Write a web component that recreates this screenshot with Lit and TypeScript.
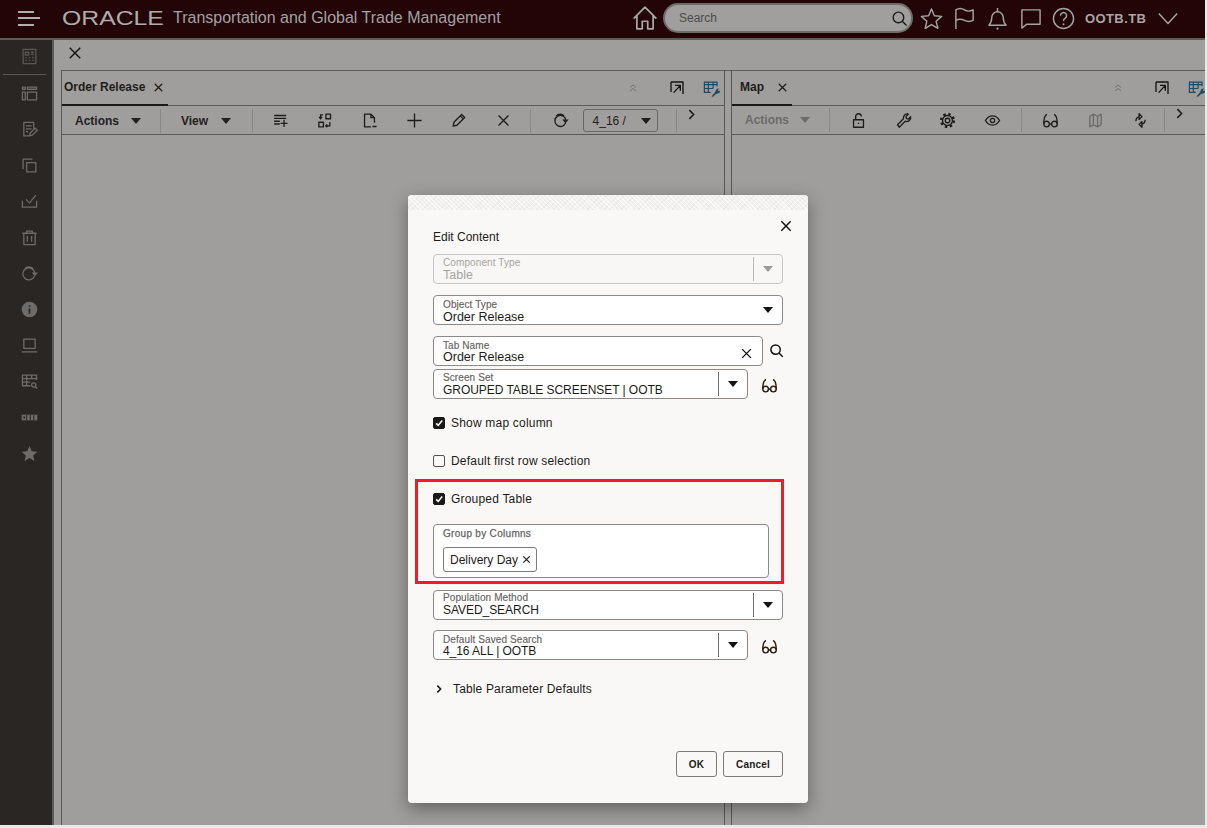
import { LitElement, html, css, svg } from "lit";
import { customElement } from "lit/decorators.js";

const P: Record<string, any> = {
  close: svg`<path d="M5 5L19 19M19 5L5 19"/>`,
  rowsPlus: svg`<path d="M3 5h17M3 9h17M3 13h8M3 17h8M17 11v10M12 16h10"/>`,
  group: svg`<rect x="14" y="3" width="6.5" height="6.5"/><rect x="4" y="14.5" width="6.5" height="6.5"/><path d="M10 4H6.5v5M4.500 7l2 2.500 2-2.500M14 19.500h5.500V14M16 17.500l-2.200 2 2.200 2" stroke-linejoin="miter"/>`,
  docMinus: svg`<path d="M14 21H5V3h9l5 5v7M14 3v5h5M16 20.500h6"/>`,
  plus: svg`<path d="M12 2v20M2 12h20"/>`,
  pencil: svg`<path d="M4.500 20l1-5.500L16.500 3.500l4.200 4.200L9.700 18.700zM14.500 5.500l4.200 4.200"/>`,
  refresh: svg`<path d="M19.500 11a7.800 7.800 0 1 0-.4 4.500M6 5.500a7.800 7.800 0 0 1 11-.2"/><path d="M14.500 10.500h9l-4.500 5.500z" fill="currentColor" stroke="none"/>`,
  lock: svg`<rect x="5" y="11" width="14" height="10.500"/><path d="M8 11V6.500a4 4 0 0 1 8 0M11 16h2"/>`,
  wrench: svg`<path d="M3.500 18l8.500-8.500a5.500 5.500 0 0 1 7-6.500l-3.400 3.400.6 2.900 2.900.6L22 6.500a5.500 5.500 0 0 1-7.500 6.500L6 21.500z"/>`,
  gear: svg`<circle cx="12" cy="12" r="3.200"/><circle cx="12" cy="12" r="7"/><circle cx="12" cy="12" r="9" stroke-width="3.400" stroke-dasharray="3.400 3.670"/>`,
  eye: svg`<circle cx="12" cy="12" r="3"/><path d="M2 12c3-5 6.500-6.500 10-6.500s7 1.500 10 6.500c-3 5-6.500 6.500-10 6.500S5 17 2 12z"/>`,
  glasses: svg`<circle cx="6.500" cy="17" r="4"/><circle cx="17.500" cy="17" r="4"/><path d="M10.500 17h3M7 3.500C4.200 4.500 2.500 10 2.500 17M17 3.500c2.800 1 4.500 6.500 4.500 13.500"/>`,
  map: svg`<path d="M4 6l5-3 6 3 5-3v15l-5 3-6-3-5 3zM9 3v15M15 6v15"/>`,
  sync: svg`<path d="M5.500 13a6.500 6.500 0 0 1 5-6.400M18.500 11a6.500 6.500 0 0 1-5 6.400M10 2.500v8l4-4zM14 21.500v-8l-4 4z"/>`,
  expand: svg`<path d="M3 3h18v18M3 3v15M9 8h8v8M17 8L7 19" stroke-linecap="butt"/>`,
  up2: svg`<path d="M6 11l6-5 6 5M6 18l6-5 6 5"/>`,
  tableTool: svg`<path d="M3 4h16v3H3zM3 7v10h8M3 12h11M8 4v13M14 4v8M19 4v5"/><path d="M12 22l5-6a4 4 0 0 1 5-4l-2 2 1 1.500 2-1a4 4 0 0 1-5 4l-4 4z" fill="currentColor" stroke="none"/>`,
  chevron: svg`<path d="M8 4l8 8-8 8"/>`,
  chevDown: svg`<path d="M2 7l10 11L22 7"/>`,
  home: svg`<path d="M1.500 12.500L12 2l10.500 10.500M4.500 10v12h5v-7h5v7h5V10"/>`,
  search: svg`<circle cx="10.500" cy="10.500" r="7.500"/><path d="M16 16l6 6"/>`,
  star: svg`<path d="M12 2l3 7.200 7.600.6-5.800 5 1.800 7.400L12 18.300l-6.600 3.900 1.800-7.400-5.800-5 7.600-.6z"/>`,
  flag: svg`<path d="M3 23V3c3-2 6-2 9 0s6 1.500 9 0v11c-3 1.500-6 1.500-9 0s-6-1.500-9 0"/>`,
  bell: svg`<path d="M3 19c2-2 3-4 3-8a6 6 0 0 1 12 0c0 4 1 6 3 8zM12 1v4"/><circle cx="12" cy="22.500" r="1.200" fill="currentColor" stroke="none"/>`,
  chat: svg`<path d="M3 3h19v15H8l-5 4z"/>`,
  help: svg`<circle cx="12" cy="12" r="10.500"/><path d="M8.800 9a3.200 3.200 0 1 1 5 2.700c-1.200.8-1.800 1.500-1.800 3"/><circle cx="12" cy="18" r="1" fill="currentColor" stroke="none"/>`,
  sCalc: svg`<rect x="3" y="2" width="18" height="20"/><path d="M6 6h5v4H6zM14 6h4M14 9h4M6 13.500h2M11 13.500h2M16 13.500h2M6 17.500h2M11 17.500h2M16 17.500h2"/>`,
  sPanel: svg`<path d="M2 3h4v3H2zM9 3h13v3H9zM2 10h4v11H2zM9 10h13v11H9z"/>`,
  sEdit: svg`<path d="M12 21H4V2h14v9M7 7h8M7 11h8M7 15h3M12 21l1-4 7-7 3 3-7 7z"/>`,
  sCopy: svg`<path d="M16 3H3v14M8 8h13v13H8z"/>`,
  sCheck: svg`<path d="M7 9l5 5L21 3M2 11v9h20v-9"/>`,
  sTrash: svg`<path d="M2 6h20M8 6V3h8v3M4 6v16h16V6M9 10v8M15 10v8"/>`,
  sRefresh: svg`<path d="M19.500 11a8.500 8.500 0 1 0-.4 4.500M5.500 5a8.500 8.500 0 0 1 11.500-.2"/><path d="M15 10.500h9l-4.500 5.500z" fill="currentColor" stroke="none"/>`,
  sInfo: svg`<circle cx="12" cy="12" r="11" fill="currentColor" stroke="none"/><path d="M12 10.500v7.500M12 6v2.200" stroke="#2a2623" stroke-width="2.400"/>`,
  sLaptop: svg`<path d="M4 3h16v13H4zM1 21h22"/>`,
  sTable: svg`<path d="M2 3h20v5H2zM2 8v10h11M2 13h11M8 3v15M15 3v5M22 3v7"/><circle cx="18" cy="17" r="3"/><path d="M20 19l3 3"/>`,
  sBar: svg`<path d="M1 8h22v8H1z" fill="currentColor" stroke="none"/><path d="M8 8v8M13 8v8M18 8v8M4 11h1v2H4z" stroke="#2a2623" stroke-width="1.400"/>`,
  sStar: svg`<path d="M12 1.500l3.200 7.300 8 .7-6 5.300 1.800 7.800L12 18.400l-7 4.200 1.800-7.800-6-5.300 8-.7z" fill="currentColor" stroke="none"/>`,
};

const ic = (name: string, cls = "") =>
  html`<svg class="ic ${cls}" viewBox="0 0 24 24" fill="none" stroke="currentColor" stroke-width="2" stroke-linejoin="round">${P[name]}</svg>`;
const caret = (cls = "") => html`<svg class="caret ${cls}" viewBox="0 0 12 7"><path d="M0 0h12L6 7z" fill="currentColor"/></svg>`;

@customElement("app-root")
export class AppRoot extends LitElement {
  static styles = css`
    :host { display: block; position: relative; width: 1207px; height: 828px; overflow: hidden; background: #e9e9e9; font-family: "Liberation Sans", Arial, sans-serif; color: #1f1d1b; }
    * { box-sizing: border-box; }
    .ic { display: block; width: 18px; height: 18px; flex: none; }
    .caret { display: block; width: 10px; height: 6px; flex: none; }
    .shell { width: 1205px; height: 825px; display: flex; flex-direction: column; background: #a09e9c; overflow: hidden; }

    header { height: 40px; flex: none; background: #230507; border-bottom: 2px solid #5e5c5a; padding-bottom: 2px; display: flex; align-items: center; color: #a8a6a4; }
    .burger { width: 24px; margin-left: 18px; display: flex; flex-direction: column; gap: 4.500px; }
    .burger i { display: block; height: 2px; background: #b0aeac; }
    .burger i:nth-child(1) { width: 16px; }
    .burger i:nth-child(2) { width: 22px; }
    .burger i:nth-child(3) { width: 16px; }
    .logo { margin-left: 20px; width: 101px; flex: none; font-size: 19.500px; line-height: 20px; transform: scaleX(1.27); transform-origin: left center; white-space: nowrap; color: #aeacaa; }
    .title { margin-left: 10px; font-size: 16px; color: #a2a2a4; white-space: nowrap; width: 460px; flex: none; }
    .home { width: 26px; height: 26px; margin-left: -1px; color: #a8a8a8; stroke-width: 1.600; }
    .search { width: 250px; height: 30px; margin-left: 5px; border-radius: 15px; background: #a09f9e; border: 2px solid #6e6c6b; display: flex; align-items: center; justify-content: space-between; padding: 0 3px 0 14px; font-size: 12px; color: #4d4b49; flex: none; }
    .search .ic { width: 17px; height: 17px; color: #1e1c1b; }
    .hicons { display: flex; align-items: center; margin-left: 7px; flex: none; }
    .hicons .ic { width: 23px; height: 23px; stroke-width: 1.500; color: #a6a4a2; margin-right: 10px; }
    .user { font-size: 13px; font-weight: 700; color: #a8a6a4; width: 62px; flex: none; white-space: nowrap; letter-spacing: .4px; }
    .usermenu { width: 22px; height: 22px; margin-left: 10px; color: #a6a4a2; stroke-width: 1.600; }

    .body { flex: 1; display: flex; min-height: 0; }
    .side { width: 54px; flex: none; background: #2a2623; border-right: 2px solid #5e5c5a; color: #6e6c6a; display: flex; flex-direction: column; align-items: stretch; }
    .side .row { height: 36px; flex: none; display: flex; align-items: center; justify-content: center; padding-left: 6px; }
    .side .row:first-child { height: 32px; margin-bottom: 2px; color: #595755; }
    .side hr { margin: 0 6px 0 3px; border: 0; border-top: 1px solid #5a5856; height: 1px; flex: none; }
    .side .ic { width: 17px; height: 17px; stroke-width: 1.800; }

    main { flex: 1; min-width: 0; display: flex; flex-direction: column; }
    .topx { height: 30px; flex: none; display: flex; align-items: center; padding: 0 0 4px 12px; }
    .topx .ic { width: 18px; height: 18px; color: #161412; stroke-width: 1.900; }
    .panels { flex: 1; display: flex; min-height: 0; border-top: 1px solid #5c5a58; margin-left: 7px; }
    .panel { border-left: 1px solid #5c5a58; display: flex; flex-direction: column; overflow: hidden; }
    .panel.l { width: 664px; border-right: 1px solid #5c5a58; }
    .panel.r { flex: 1; min-width: 0; margin-left: 6px; }
    .tabbar { height: 35px; flex: none; display: flex; align-items: stretch; border-bottom: 1px solid #5c5a58; }
    .tab { display: flex; align-items: center; font-size: 12px; font-weight: 700; color: #1f1d1b; border-bottom: 2px solid #1a1816; margin-bottom: -1px; padding-bottom: 1px; flex: none; }
    .l .tab { width: 106px; padding-left: 2px; }
    .r .tab { width: 60px; padding-left: 8px; }
    .tab .ic { width: 13px; height: 13px; stroke-width: 2.200; }
    .l .tab .ic { margin-left: 7px; }
    .r .tab .ic { margin-left: 12px; }
    .tabtools { display: flex; align-items: center; margin-left: auto; flex: none; }
    .tabtools .u { width: 12px; height: 12px; color: #737170; stroke-width: 2; }
    .tabtools .e { width: 16px; height: 16px; margin-left: 30px; color: #14120f; stroke-width: 2; }
    .tabtools .t { width: 19px; height: 19px; margin-left: 17px; color: #1c4a63; stroke-width: 1.500; flex: none; }
    .l .tabtools { padding-right: 3px; }
    .r .tabtools { margin-right: -1px; }
    .tools { height: 29px; flex: none; display: flex; align-items: center; border-bottom: 1px solid #5c5a58; font-size: 12px; font-weight: 700; color: #23211f; }
    .l .tools { padding-top: 1px; }
    .sep { width: 1px; height: 24px; background: #8a8886; flex: none; }
    .b { display: flex; align-items: center; flex: none; }
    .b .caret { margin-left: 12px; }
    .l .act { margin-left: 13px; width: 72px; }
    .l .act + .sep { margin-left: 13px; }
    .l .view { margin-left: 20px; width: 51px; }
    .l .view .caret { margin-left: 13px; }
    .l .view + .sep { margin-left: 20px; }
    .slot { width: 44.600px; display: flex; justify-content: center; flex: none; }
    .slot .ic { width: 17px; height: 17px; stroke-width: 1.900; color: #1f1d1b; }
    .slots { display: flex; margin-left: 5px; flex: none; }
    .slots + .sep { margin-left: 4px; }
    .ref { margin-left: 8px; width: 44px; }
    .sel { width: 75px; height: 23px; border: 1px solid #6a6866; border-radius: 3px; display: flex; align-items: center; justify-content: space-between; padding: 0 6px 0 9px; font-weight: 400; font-size: 12px; flex: none; color: #1f1d1b; }
    .sel .caret { margin: 0; }
    .sel + .sep { margin-left: 18px; }
    .more { width: 16px; margin-left: 8px; align-self: flex-start; margin-top: 1px; flex: none; }
    .more .ic { width: 13px; height: 13px; stroke-width: 3; color: #1f1d1b; }
    .r .act { margin-left: 13px; width: 70px; color: #6d6b69; }
    .r .act .caret { margin-left: 11px; }
    .r .act + .sep { margin-left: 14px; }
    .r .slots .dis .ic { color: #6d6b69; }
    .r .slots { margin-left: 6px; }
    .r .slots .slot { width: 44.800px; }
    .r .slots + .sep { margin-left: 6px; }
    .r .g2 + .sep { margin-left: 1px; }
    .r .more { margin-left: 8px; }

    .modal { position: absolute; left: 408px; top: 195px; width: 400px; height: 608px; background: #faf8f6; border-radius: 4px; box-shadow: 0 6px 18px rgba(0,0,0,.38); overflow: hidden; display: flex; flex-direction: column; }
    .band { height: 15px; flex: none; background-color: #f3f1ef; background-image: repeating-linear-gradient(45deg, rgba(255,255,255,.6) 0 1px, transparent 1px 3px), repeating-linear-gradient(-45deg, rgba(200,198,196,.22) 0 1px, transparent 1px 4px); }
    .mx { position: absolute; top: 23px; right: 14px; width: 16px; height: 16px; color: #161412; stroke-width: 2.200; }
    .form { padding: 0 25px; display: flex; flex-direction: column; flex: 1; min-height: 0; }
    .h { font-size: 12px; line-height: 14px; margin-top: 20px; color: #1d1b19; }
    .f { height: 30px; flex: none; border: 1px solid #8b8886; border-radius: 4px; background: #fff; display: flex; align-items: stretch; }
    .f .tx { flex: 1; min-width: 0; padding: 2px 0 0 9px; }
    .lb { display: block; font-size: 10px; line-height: 12px; color: #66635f; letter-spacing: .1px; -webkit-text-stroke: .15px #66635f; }
    .val { display: block; font-size: 12.500px; line-height: 13px; color: #1d1b19; white-space: nowrap; }
    .val.caps { font-size: 12px; letter-spacing: -.05px; }
    .f .p3 { padding-top: 3px; }
    .f .p1 { padding-top: 1px; }
    .lh11 .lb { line-height: 11px; }
    .dd { width: 29px; flex: none; display: flex; align-items: center; justify-content: center; position: relative; color: #151311; }
    .dd.div::before { content: ""; position: absolute; left: 0; top: 2px; bottom: 2px; width: 1px; background: #6f6c6a; }
    .f.dis { background: #f8f7f5; border-color: #c9c7c5; margin-top: 10px; }
    .f.dis .lb { color: #a7a5a2; -webkit-text-stroke: 0; }
    .f.dis .val { color: #a7a5a2; }
    .f.dis .dd { color: #9c9a98; }
    .f.dis .dd.div::before { background: #bcbab8; }
    .mt11 { margin-top: 11px; }
    .wrow { display: flex; align-items: center; flex: none; }
    .tn { width: 330px; }
    .ss { width: 315px; }
    .wrow .glass { width: 17px; height: 17px; margin: 2px 0 0 13px; color: #2b1f10; stroke-width: 2; }
    .wrow .sr { width: 15px; height: 15px; margin: -2px 0 0 6px; color: #151311; stroke-width: 2.400; }
    .cx { width: 15px; height: 15px; stroke-width: 2.200; margin: 9px 8px 0 0; color: #151311; }
    .mt3 { margin-top: 3px; }
    .chk { display: flex; align-items: center; height: 16px; font-size: 12px; color: #1d1b19; letter-spacing: .2px; flex: none; }
    .box { width: 12px; height: 12px; border-radius: 2px; border: 1px solid #1b1917; background: #1b1917; margin-right: 6px; display: flex; align-items: center; justify-content: center; flex: none; }
    .box.off { background: #faf8f6; border-color: #54524f; border-width: 1.500px; }
    .box svg { width: 8px; height: 8px; }
    .c1 { margin-top: 16px; }
    .c2 { margin-top: 22px; }
    .red { margin: 10px -1px 0 -18px; height: 105px; border: 3px solid #ee1c25; padding: 9px 12px 0 15px; flex: none; display: flex; flex-direction: column; }
    .gb { height: 54px; margin-top: 17px; background: #fff; border: 1px solid #8b8886; border-radius: 4px; padding: 3px 9px 0; flex: none; }
    .gb .lb { line-height: 11px; letter-spacing: .3px; -webkit-text-stroke: .25px #66635f; }
    .chip { display: inline-flex; align-items: center; height: 25px; width: 94px; margin-top: 8px; border: 1px solid #7d7a78; border-radius: 3px; padding-left: 6px; font-size: 12px; color: #1d1b19; white-space: nowrap; }
    .chip .ic { width: 11px; height: 11px; stroke-width: 2.500; margin-left: 3px; }
    .pm { margin-top: 6px; }
    .dss { margin-top: 10px; }
    .exp { margin-top: 21px; display: flex; align-items: center; height: 16px; font-size: 12px; color: #1d1b19; flex: none; letter-spacing: .15px; }
    .exp .ic { width: 10px; height: 10px; stroke-width: 4; margin-right: 9px; margin-left: 1px; }
    .btns { margin-top: auto; margin-bottom: 26px; display: flex; justify-content: flex-end; gap: 6px; flex: none; }
    .btn { height: 26px; border: 1px solid #7d7a78; border-radius: 3px; font-size: 10px; font-weight: 700; display: flex; align-items: center; justify-content: center; color: #1d1b19; letter-spacing: .2px; }
    .ok { width: 41px; }
    .cancel { width: 60px; }
  `;

  private slots(names: string[], cls = "", dis = -1) {
    return html`<div class="slots ${cls}">${names.map((n, i) => html`<div class="slot ${i === dis ? "dis" : ""}">${ic(n)}</div>`)}</div>`;
  }

  private check(on: boolean) {
    return html`<span class="box ${on ? "" : "off"}">${on ? html`<svg viewBox="0 0 10 10"><path d="M1.500 5.500l2.500 2.500 5-6" fill="none" stroke="#fff" stroke-width="2"/></svg>` : ""}</span>`;
  }

  render() {
    const side = ["sPanel", "sEdit", "sCopy", "sCheck", "sTrash", "sRefresh", "sInfo", "sLaptop", "sTable", "sBar", "sStar"];
    return html`
      <div class="shell">
        <header>
          <div class="burger"><i></i><i></i><i></i></div>
          <div class="logo">ORACLE</div>
          <div class="title">Transportation and Global Trade Management</div>
          ${ic("home", "home")}
          <div class="search"><span>Search</span>${ic("search")}</div>
          <div class="hicons">${ic("star")}${ic("flag")}${ic("bell")}${ic("chat")}${ic("help")}</div>
          <div class="user">OOTB.TB</div>
          ${ic("chevDown", "usermenu")}
        </header>
        <div class="body">
          <nav class="side">
            <div class="row">${ic("sCalc")}</div>
            <hr />
            ${side.map((n) => html`<div class="row">${ic(n)}</div>`)}
          </nav>
          <main>
            <div class="topx">${ic("close")}</div>
            <div class="panels">
              <section class="panel l">
                <div class="tabbar">
                  <div class="tab">Order Release${ic("close")}</div>
                  <div class="tabtools">${ic("up2", "u")}${ic("expand", "e")}${ic("tableTool", "t")}</div>
                </div>
                <div class="tools">
                  <div class="b act">Actions${caret()}</div><div class="sep"></div>
                  <div class="b view">View${caret()}</div><div class="sep"></div>
                  ${this.slots(["rowsPlus", "group", "docMinus", "plus", "pencil", "close"])}<div class="sep"></div>
                  <div class="slot ref">${ic("refresh")}</div>
                  <div class="sel"><span>4_16 /</span>${caret()}</div><div class="sep"></div>
                  <div class="more">${ic("chevron")}</div>
                </div>
              </section>
              <section class="panel r">
                <div class="tabbar">
                  <div class="tab">Map${ic("close")}</div>
                  <div class="tabtools">${ic("up2", "u")}${ic("expand", "e")}${ic("tableTool", "t")}</div>
                </div>
                <div class="tools">
                  <div class="b act">Actions${caret()}</div><div class="sep"></div>
                  ${this.slots(["lock", "wrench", "gear", "eye"])}<div class="sep"></div>
                  ${this.slots(["glasses", "map", "sync"], "g2", 1)}<div class="sep"></div>
                  <div class="more">${ic("chevron")}</div>
                </div>
              </section>
            </div>
          </main>
        </div>
      </div>
      <div class="modal" role="dialog">
        <div class="band"></div>
        ${ic("close", "mx")}
        <div class="form">
          <div class="h">Edit Content</div>
          <div class="f dis"><div class="tx"><span class="lb">Component Type</span><span class="val">Table</span></div><div class="dd div">${caret()}</div></div>
          <div class="f mt11"><div class="tx p3"><span class="lb">Object Type</span><span class="val">Order Release</span></div><div class="dd">${caret()}</div></div>
          <div class="wrow mt11"><div class="f tn"><div class="tx p3 lh11"><span class="lb">Tab Name</span><span class="val">Order Release</span></div>${ic("close", "cx")}</div>${ic("search", "sr")}</div>
          <div class="wrow mt3"><div class="f ss"><div class="tx"><span class="lb">Screen Set</span><span class="val caps">GROUPED TABLE SCREENSET | OOTB</span></div><div class="dd div">${caret()}</div></div>${ic("glasses", "glass")}</div>
          <div class="chk c1">${this.check(true)}Show map column</div>
          <div class="chk c2">${this.check(false)}Default first row selection</div>
          <div class="red">
            <div class="chk">${this.check(true)}Grouped Table</div>
            <div class="gb"><span class="lb">Group by Columns</span><span class="chip">Delivery Day${ic("close")}</span></div>
          </div>
          <div class="f pm"><div class="tx p1"><span class="lb">Population Method</span><span class="val caps">SAVED_SEARCH</span></div><div class="dd div">${caret()}</div></div>
          <div class="wrow dss"><div class="f ss"><div class="tx p3 lh11"><span class="lb">Default Saved Search</span><span class="val caps">4_16 ALL | OOTB</span></div><div class="dd div">${caret()}</div></div>${ic("glasses", "glass")}</div>
          <div class="exp">${ic("chevron")}Table Parameter Defaults</div>
          <div class="btns"><div class="btn ok">OK</div><div class="btn cancel">Cancel</div></div>
        </div>
      </div>
    `;
  }
}
